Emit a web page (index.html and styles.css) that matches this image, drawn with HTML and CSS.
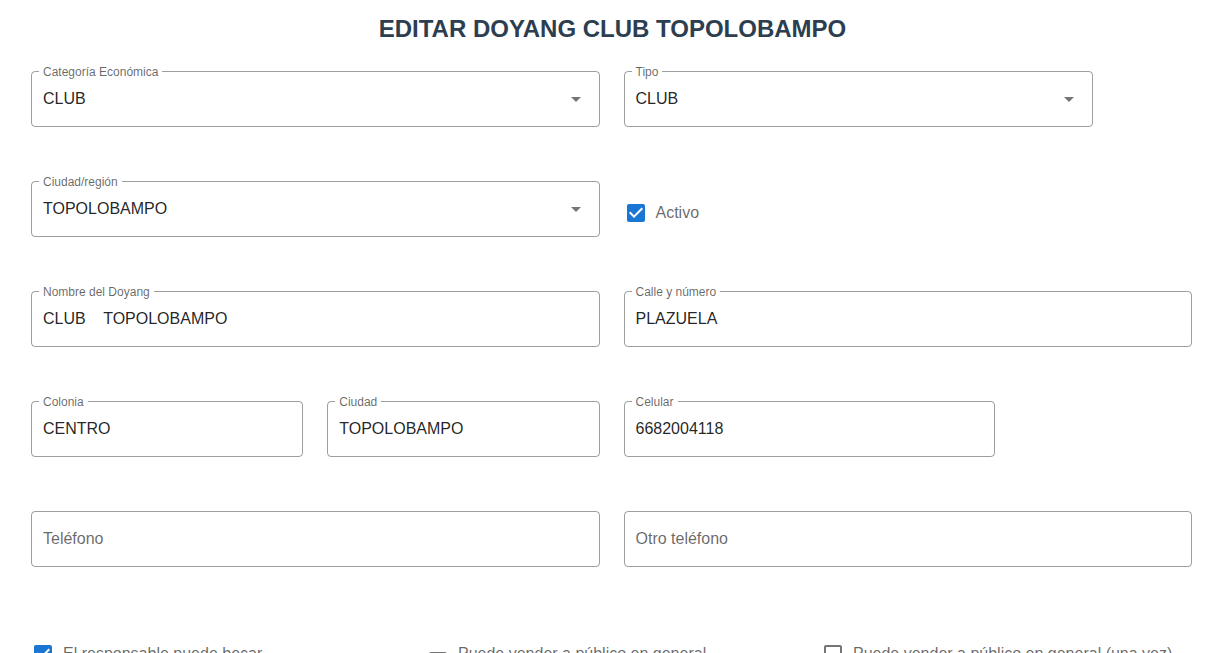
FILE: index.html
```html
<!DOCTYPE html>
<html lang="es">
<head>
  <meta charset="UTF-8" />
  <meta name="viewport" content="width=device-width, initial-scale=1.0"/>
  <title>Editar Doyang</title>
  <link rel="stylesheet" href="styles.css">
</head>
<body>
  <h1 class="title">EDITAR DOYANG CLUB TOPOLOBAMPO</h1>

  <form class="form">
    <div class="field span-6">
      <span class="field-label">Categoría Económica</span>
      <div class="select-value">CLUB</div>
      <svg class="arrow" viewBox="0 0 24 24"><path d="M7 10l5 5 5-5z"/></svg>
    </div>
    <div class="field span-5">
      <span class="field-label">Tipo</span>
      <div class="select-value">CLUB</div>
      <svg class="arrow" viewBox="0 0 24 24"><path d="M7 10l5 5 5-5z"/></svg>
    </div>

    <div class="field span-6">
      <span class="field-label">Ciudad/región</span>
      <div class="select-value">TOPOLOBAMPO</div>
      <svg class="arrow" viewBox="0 0 24 24"><path d="M7 10l5 5 5-5z"/></svg>
    </div>
    <label class="check span-6 check-activo">
      <svg class="box checked" viewBox="0 0 24 24"><path d="M19 3H5c-1.11 0-2 .9-2 2v14c0 1.1.89 2 2 2h14c1.11 0 2-.9 2-2V5c0-1.1-.89-2-2-2zm-9 14l-5-5 1.41-1.41L10 14.170l7.59-7.59L19 8l-9 9z"/></svg>
      <span>Activo</span>
    </label>

    <div class="field span-6">
      <span class="field-label">Nombre del Doyang</span>
      <input type="text" value="CLUB    TOPOLOBAMPO">
    </div>
    <div class="field span-6">
      <span class="field-label">Calle y número</span>
      <input type="text" value="PLAZUELA">
    </div>

    <div class="field span-3">
      <span class="field-label">Colonia</span>
      <input type="text" value="CENTRO">
    </div>
    <div class="field span-3">
      <span class="field-label">Ciudad</span>
      <input type="text" value="TOPOLOBAMPO">
    </div>
    <div class="field span-4">
      <span class="field-label">Celular</span>
      <input type="text" value="6682004118">
    </div>

    <div class="field span-6">
      <input type="text" placeholder="Teléfono">
    </div>
    <div class="field span-6">
      <input type="text" placeholder="Otro teléfono">
    </div>

    <label class="check span-4 check-row">
      <svg class="box checked" viewBox="0 0 24 24"><path d="M19 3H5c-1.11 0-2 .9-2 2v14c0 1.1.89 2 2 2h14c1.11 0 2-.9 2-2V5c0-1.1-.89-2-2-2zm-9 14l-5-5 1.41-1.41L10 14.17l7.59-7.59L19 8l-9 9z"/></svg>
      <span>El responsable puede becar</span>
    </label>
    <label class="check span-4 check-row">
      <svg class="box low" viewBox="0 0 24 24"><path d="M19 5v14H5V5h14m0-2H5c-1.1 0-2 .9-2 2v14c0 1.1.9 2 2 2h14c1.1 0 2-.9 2-2V5c0-1.1-.9-2-2-2z"/></svg>
      <span>Puede vender a público en general</span>
    </label>
    <label class="check span-4 check-row">
      <svg class="box" viewBox="0 0 24 24"><path d="M19 5v14H5V5h14m0-2H5c-1.1 0-2 .9-2 2v14c0 1.1.9 2 2 2h14c1.1 0 2-.9 2-2V5c0-1.1-.9-2-2-2z"/></svg>
      <span>Puede vender a público en general (una vez)</span>
    </label>
  </form>
</body>
</html>
```

FILE: styles.css
```css
:root {
  --primary: #1976d2;
  --text: rgba(0, 0, 0, 0.87);
  --muted: rgba(0, 0, 0, 0.6);
  --border: rgba(0, 0, 0, 0.38);
}

* {
  box-sizing: border-box;
}

body {
  margin: 0;
  font-family: 'Liberation Sans', Arial, sans-serif;
  background: #fff;
  color: var(--text);
}

.title {
  margin: 14px 0 0;
  text-align: center;
  font-size: 24px;
  line-height: 29px;
  font-weight: bold;
  color: #2c3e50;
}

.form {
  display: grid;
  grid-template-columns: repeat(12, 1fr);
  column-gap: 24px;
  row-gap: 54px;
  padding: 28px 33px 60px 31px;
}

.span-3 { grid-column: span 3; }
.span-4 { grid-column: span 4; }
.span-5 { grid-column: span 5; }
.span-6 { grid-column: span 6; }

.field {
  position: relative;
  display: flex;
  align-items: center;
  height: 56px;
  padding: 0 11px;
  border: 1px solid var(--border);
  border-radius: 4px;
}

.field-label {
  position: absolute;
  top: -6px;
  left: 7px;
  padding: 0 4px;
  background: #fff;
  font-size: 12px;
  line-height: 12px;
  color: var(--muted);
}

.select-value,
.field input {
  flex: 1;
  font-size: 16px;
  color: var(--text);
}

.field input {
  border: none;
  outline: none;
  padding: 0;
  margin: 0;
  font-family: inherit;
  background: transparent;
}

.field input::placeholder {
  color: var(--muted);
  opacity: 1;
}

.arrow {
  width: 24px;
  height: 24px;
  fill: rgba(0, 0, 0, 0.54);
}

.check {
  display: flex;
  align-items: center;
  gap: 8px;
  height: 42px;
  font-size: 16px;
  color: var(--muted);
  cursor: pointer;
}

.check-activo {
  align-self: center;
  margin-top: 8px;
}

.check-row {
  margin-top: 12px;
}

.box {
  width: 24px;
  height: 24px;
  flex: none;
  fill: rgba(0, 0, 0, 0.54);
}

.box.checked {
  fill: var(--primary);
}

.box.low {
  margin-top: 14px;
}
```
